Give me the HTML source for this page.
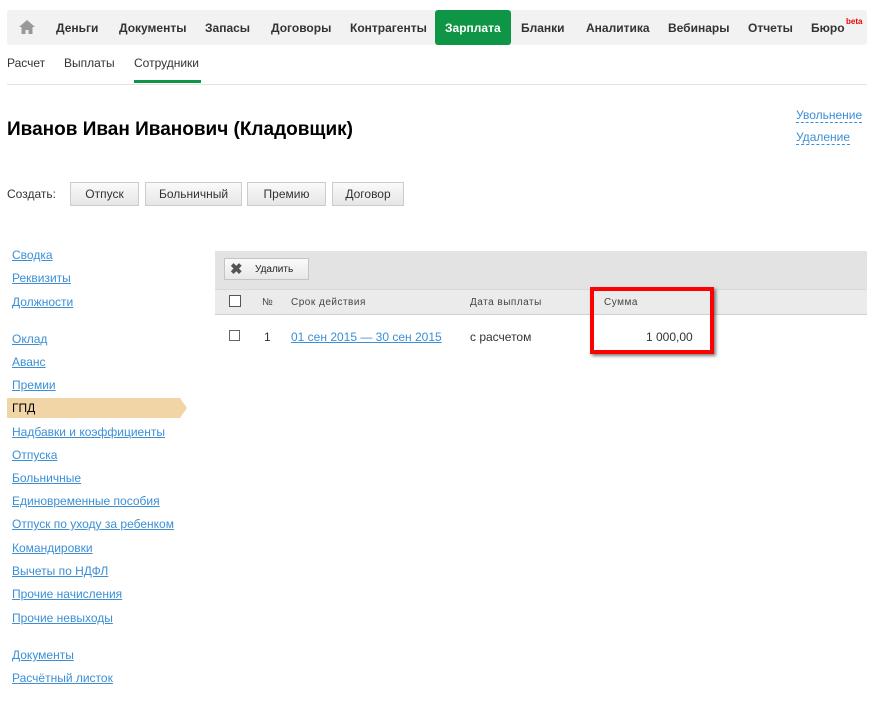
<!DOCTYPE html>
<html><head><meta charset="utf-8"><style>
body{margin:0;width:880px;height:702px;background:#fff;font-family:"Liberation Sans",Arial,sans-serif;position:relative;overflow:hidden;color:#333}
.a{position:absolute;white-space:nowrap}
.nav{left:7px;top:10px;width:860px;height:35px;background:#f2f2f2;border-radius:3px}
.ni{top:21px;font-size:12px;font-weight:bold;color:#333}
.lnk{color:#3b8fd6;text-decoration:underline;font-size:12px}
.btn{top:182px;height:24px;background:linear-gradient(#fafafa,#e6e6e6);border:1px solid #ccc;box-sizing:border-box;font-size:12px;text-align:center;line-height:22px;color:#333}
.lm{left:12px;font-size:12px;color:#3b8fd6;text-decoration:underline}
.th{top:297px;font-size:10px;color:#444;letter-spacing:.5px}
.cb{width:10px;height:10px;border:1px solid #555;background:#fff;box-sizing:border-box}
</style></head><body>
<div class="a nav"></div>
<svg class="a" style="left:18px;top:19px" width="18" height="16" viewBox="0 0 18 16"><path d="M9 1L1 8h2.5v7h4v-4h3v4h4V8H17z" fill="#999"/></svg>
<div class="a ni" style="left:56px">Деньги</div>
<div class="a ni" style="left:119px">Документы</div>
<div class="a ni" style="left:205px">Запасы</div>
<div class="a ni" style="left:271px">Договоры</div>
<div class="a ni" style="left:350px">Контрагенты</div>
<div class="a" style="left:435px;top:10px;width:76px;height:35px;background:#0e9646;border-radius:3px"></div>
<div class="a ni" style="left:445px;color:#fff">Зарплата</div>
<div class="a ni" style="left:521px">Бланки</div>
<div class="a ni" style="left:586px">Аналитика</div>
<div class="a ni" style="left:668px">Вебинары</div>
<div class="a ni" style="left:748px">Отчеты</div>
<div class="a ni" style="left:811px">Бюро</div>
<div class="a" style="left:846px;top:17px;font-size:8px;color:#e00;font-weight:bold">beta</div>

<div class="a" style="left:7px;top:56px;font-size:12px">Расчет</div>
<div class="a" style="left:64px;top:56px;font-size:12px">Выплаты</div>
<div class="a" style="left:134px;top:56px;font-size:12px">Сотрудники</div>
<div class="a" style="left:134px;top:80px;width:67px;height:3px;background:#0e9646"></div>
<div class="a" style="left:7px;top:84px;width:860px;height:1px;background:#e2e2e2"></div>

<div class="a" style="left:7px;top:119px;font-size:19px;font-weight:bold;color:#000">Иванов Иван Иванович (Кладовщик)</div>
<div class="a" style="left:796px;top:108px;font-size:12px;color:#3b8fd6;border-bottom:1px dashed #3b8fd6">Увольнение</div>
<div class="a" style="left:796px;top:130px;font-size:12px;color:#3b8fd6;border-bottom:1px dashed #3b8fd6">Удаление</div>

<div class="a" style="left:7px;top:187px;font-size:12px">Создать:</div>
<div class="a btn" style="left:70px;width:69px">Отпуск</div>
<div class="a btn" style="left:145px;width:97px">Больничный</div>
<div class="a btn" style="left:247px;width:79px">Премию</div>
<div class="a btn" style="left:332px;width:72px">Договор</div>

<div class="a lm" style="top:248px">Сводка</div>
<div class="a lm" style="top:271px">Реквизиты</div>
<div class="a lm" style="top:295px">Должности</div>
<div class="a lm" style="top:332px">Оклад</div>
<div class="a lm" style="top:355px">Аванс</div>
<div class="a lm" style="top:378px">Премии</div>
<svg class="a" style="left:7px;top:398px" width="180" height="20"><path d="M0 0H173L180 10L173 20H0Z" fill="#f2d5a6"/></svg>
<div class="a" style="left:12px;top:401px;font-size:12px;color:#000">ГПД</div>
<div class="a lm" style="top:425px">Надбавки и коэффициенты</div>
<div class="a lm" style="top:448px">Отпуска</div>
<div class="a lm" style="top:471px">Больничные</div>
<div class="a lm" style="top:494px">Единовременные пособия</div>
<div class="a lm" style="top:517px">Отпуск по уходу за ребенком</div>
<div class="a lm" style="top:541px">Командировки</div>
<div class="a lm" style="top:564px">Вычеты по НДФЛ</div>
<div class="a lm" style="top:587px">Прочие начисления</div>
<div class="a lm" style="top:611px">Прочие невыходы</div>
<div class="a lm" style="top:648px">Документы</div>
<div class="a lm" style="top:671px">Расчётный листок</div>

<div class="a" style="left:215px;top:251px;width:652px;height:38px;background:#e3e3e3"></div>
<div class="a" style="left:224px;top:258px;width:85px;height:22px;background:linear-gradient(#fafafa,#e8e8e8);border:1px solid #c4c4c4;box-sizing:border-box"></div>
<div class="a" style="left:230px;top:260px;font-size:15px;font-weight:bold;color:#555">✖</div>
<div class="a" style="left:255px;top:264px;font-size:10px;color:#222">Удалить</div>
<div class="a" style="left:215px;top:289px;width:652px;height:26px;background:#ebebeb;border-top:1px solid #d8d8d8;border-bottom:1px solid #d0d0d0;box-sizing:border-box"></div>
<div class="a cb" style="left:229px;top:295px;width:12px;height:12px"></div>
<div class="a th" style="left:262px">№</div>
<div class="a th" style="left:291px">Срок действия</div>
<div class="a th" style="left:470px">Дата выплаты</div>
<div class="a th" style="left:604px">Сумма</div>
<div class="a cb" style="left:229px;top:330px;width:11px;height:11px;border-color:#666"></div>
<div class="a" style="left:264px;top:330px;font-size:12px">1</div>
<div class="a lnk" style="left:291px;top:330px">01 сен 2015 — 30 сен 2015</div>
<div class="a" style="left:470px;top:330px;font-size:12px">с расчетом</div>
<div class="a" style="left:646px;top:330px;font-size:12px">1 000,00</div>
<div class="a" style="left:590px;top:287px;width:124px;height:67px;border:4px solid #f00;box-sizing:border-box;box-shadow:2px 2px 3px rgba(0,0,0,.5)"></div>
</body></html>
